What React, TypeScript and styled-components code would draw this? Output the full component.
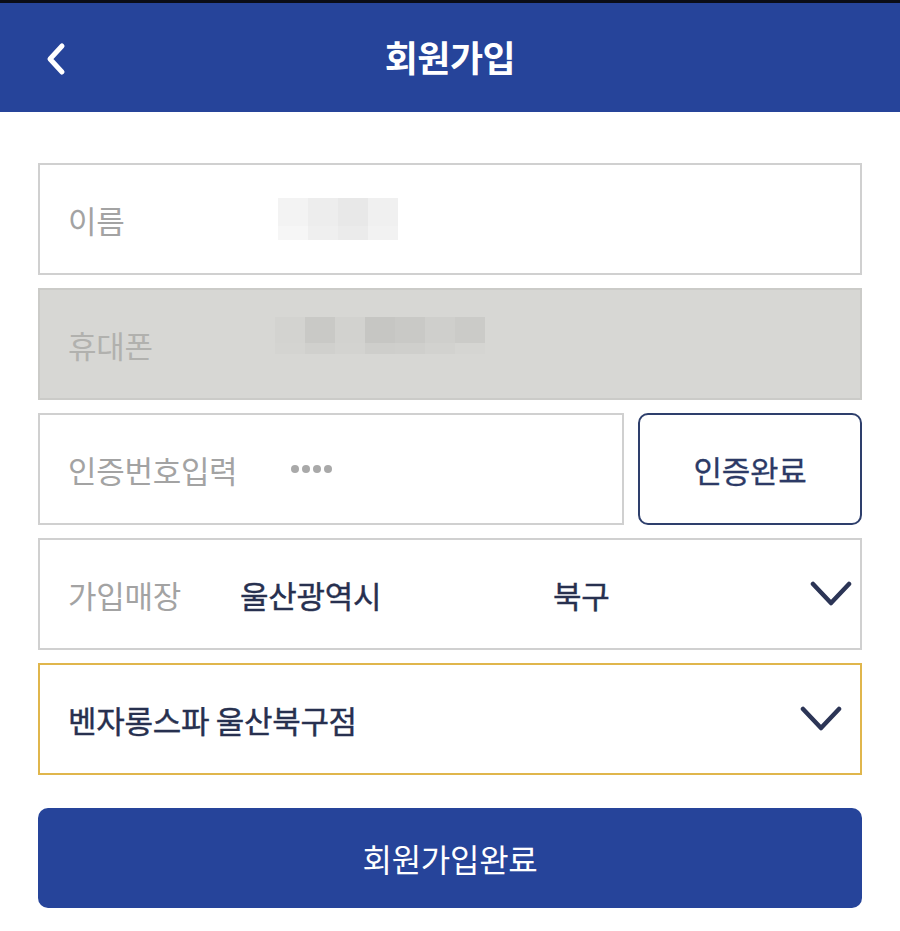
import React from "react";
import styled, { createGlobalStyle } from "styled-components";

const FONT = `"Noto Sans CJK KR", "Noto Sans", sans-serif`;
const BLUE = "#26449a";
const NAVY = "#27304f";

const GlobalStyle = createGlobalStyle`
   html, body {
      margin: 0;
      padding: 0;
      background: #ffffff;
      font-family: ${FONT};
   }
   * { box-sizing: border-box; }
`;

const Page = styled.div`
   width: 900px;
   min-height: 931px;
   background: #fff;
`;

const StatusStrip = styled.div`
   height: 3px;
   background: #0b0d16;
`;

const Header = styled.header`
   height: 109px;
   background: ${BLUE};
   display: flex;
   align-items: center;
   justify-content: center;
   position: relative;
`;

const BackButton = styled.button`
   position: absolute;
   left: 38px;
   top: 34px;
   width: 36px;
   height: 44px;
   padding: 0;
   border: none;
   background: transparent;
   display: flex;
   align-items: center;
   justify-content: center;
`;

const Title = styled.h1`
   margin: 0;
   margin-top: -4px;
   color: #fff;
   font-size: 36px;
   font-weight: 700;
   letter-spacing: -0.5px;
`;

const Form = styled.main`
   display: flex;
   flex-direction: column;
   gap: 13px;
   padding: 51px 38px 0;
`;

const Field = styled.div<{ $disabled?: boolean; $focus?: boolean; $grow?: boolean }>`
   height: 112px;
   flex: ${(p) => (p.$grow ? "1 1 0" : "none")};
   min-width: 0;
   display: flex;
   align-items: center;
   padding: 0 28px;
   border: 2px solid ${(p) => (p.$focus ? "#e0b64c" : p.$disabled ? "#cbcbc8" : "#d0d0d0")};
   background: ${(p) => (p.$disabled ? "#d7d7d4" : "#fff")};
`;

const Label = styled.span<{ $disabled?: boolean; $width?: number }>`
   font-size: 31px;
   color: ${(p) => (p.$disabled ? "#b1b1ae" : "#a3a3a3")};
   width: ${(p) => (p.$width ? `${p.$width}px` : "auto")};
   flex-shrink: 0;
   letter-spacing: -0.3px;
`;

const Value = styled.span<{ $width?: number }>`
   font-size: 31px;
   font-weight: 400;
   color: ${NAVY};
   width: ${(p) => (p.$width ? `${p.$width}px` : "auto")};
   flex-shrink: 0;
   letter-spacing: -0.3px;
   -webkit-text-stroke: 0.4px ${NAVY};
`;

const Mosaic = styled.div<{ $cols: number; $rows: string; $lift?: number }>`
   display: grid;
   grid-template-columns: repeat(${(p) => p.$cols}, 30px);
   grid-template-rows: ${(p) => p.$rows};
   margin-bottom: ${(p) => (p.$lift ? p.$lift * 2 : 0)}px;
`;

const Cell = styled.div<{ $color: string }>`
   background: ${(p) => p.$color};
`;

const Dots = styled.span`
   display: flex;
   gap: 3px;
   margin-left: 54px;
   & i {
      width: 8px;
      height: 8px;
      border-radius: 50%;
      background: #a9a9a9;
   }
`;

const Row = styled.div`
   display: flex;
   gap: 14px;
`;

const VerifyButton = styled.button`
   width: 224px;
   height: 112px;
   flex-shrink: 0;
   border: 2px solid #2e3f6c;
   border-radius: 10px;
   background: #fff;
   color: #2c3a66;
   font-family: ${FONT};
   font-size: 31px;
   font-weight: 400;
   letter-spacing: -0.3px;
   -webkit-text-stroke: 0.3px #2c3a66;
`;

const Chevron = styled.svg<{ $right: number }>`
   margin-left: auto;
   margin-right: ${(p) => p.$right}px;
   flex-shrink: 0;
`;

const SubmitButton = styled.button`
   margin-top: 20px;
   height: 100px;
   border: none;
   border-radius: 10px;
   background: ${BLUE};
   color: #fff;
   font-family: ${FONT};
   font-size: 32px;
   font-weight: 400;
   letter-spacing: -0.3px;
`;

const nameCells = [
   "#f3f3f3", "#ededed", "#e8e8e8", "#f0f0f0",
   "#f6f6f6", "#efefef", "#ebebeb", "#f2f2f2",
];

const phoneCells = [
   "#d3d3d0", "#c9c9c6", "#d2d2cf", "#c6c6c3", "#c9c9c6", "#cfcfcc", "#cbcbc8",
   "#d4d4d1", "#d0d0cd", "#d3d3d0", "#cececb", "#cfcfcc", "#d2d2cf", "#d5d5d2",
];

const DownChevron: React.FC<{ right: number }> = ({ right }) => (
   <Chevron $right={right} width="42" height="26" viewBox="0 0 42 26">
      <polyline points="3,3 21,22 39,3" fill="none" stroke="#2c3556" strokeWidth="4.5" strokeLinecap="round" strokeLinejoin="round" />
   </Chevron>
);

const App: React.FC = () => {
   return (
      <Page>
         <GlobalStyle />
         <StatusStrip />
         <Header>
            <BackButton aria-label="back">
               <svg width="22" height="34" viewBox="0 0 22 34">
                  <polyline points="17,4 5,17 17,30" fill="none" stroke="#fff" strokeWidth="5" strokeLinecap="round" strokeLinejoin="round" />
               </svg>
            </BackButton>
            <Title>회원가입</Title>
         </Header>

         <Form>
            <Field>
               <Label $width={210}>이름</Label>
               <Mosaic $cols={4} $rows="28px 14px">
                  {nameCells.map((c, i) => <Cell key={i} $color={c} />)}
               </Mosaic>
            </Field>

            <Field $disabled>
               <Label $disabled $width={207}>휴대폰</Label>
               <Mosaic $cols={7} $rows="26px 11px" $lift={9}>
                  {phoneCells.map((c, i) => <Cell key={i} $color={c} />)}
               </Mosaic>
            </Field>

            <Row>
               <Field $grow>
                  <Label>인증번호입력</Label>
                  <Dots><i /><i /><i /><i /></Dots>
               </Field>
               <VerifyButton>인증완료</VerifyButton>
            </Row>

            <Field>
               <Label $width={172}>가입매장</Label>
               <Value $width={313}>울산광역시</Value>
               <Value>북구</Value>
               <DownChevron right={-20} />
            </Field>

            <Field $focus>
               <Value>벤자롱스파 울산북구점</Value>
               <DownChevron right={-10} />
            </Field>

            <SubmitButton>회원가입완료</SubmitButton>
         </Form>
      </Page>
    );
};

export default App;
